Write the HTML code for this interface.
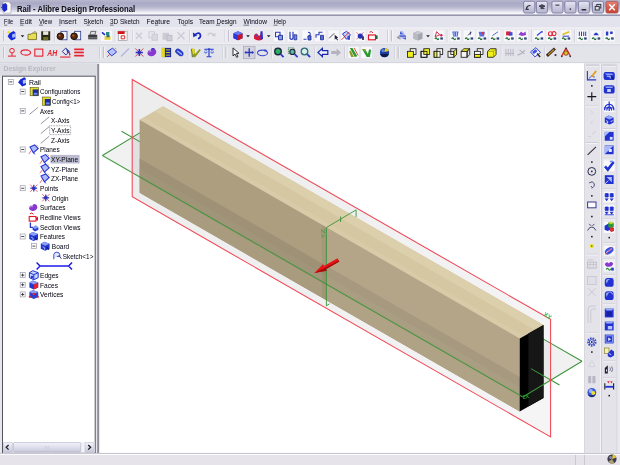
<!DOCTYPE html>
<html><head><meta charset="utf-8"><title>Rail - Alibre Design Professional</title>
<style>
html,body{margin:0;padding:0;background:#ebe9ee;}
body{width:620px;height:465px;overflow:hidden;position:relative;font-family:"Liberation Sans",sans-serif;}
svg{position:absolute;left:0;top:0;display:block}
text{font-family:"Liberation Sans",sans-serif;}
</style></head><body>
<svg width="620" height="465" viewBox="0 0 620 465">
<defs>
<linearGradient id="tb" x1="0" y1="0" x2="0" y2="1">
<stop offset="0" stop-color="#b8b8d0"/><stop offset="0.2" stop-color="#a9a9c5"/><stop offset="0.42" stop-color="#b4b4ce"/><stop offset="0.62" stop-color="#cfcfe0"/><stop offset="0.78" stop-color="#f0f0f7"/><stop offset="0.84" stop-color="#fafafd"/><stop offset="0.9" stop-color="#c4c4d4"/><stop offset="0.95" stop-color="#8e8ea8"/><stop offset="1" stop-color="#a0a0b8"/>
</linearGradient>
<linearGradient id="btn" x1="0" y1="0" x2="0" y2="1">
<stop offset="0" stop-color="#e6e6f4"/><stop offset="1" stop-color="#b2b2cc"/>
</linearGradient>
<linearGradient id="cls" x1="0" y1="0" x2="0" y2="1">
<stop offset="0" stop-color="#e88070"/><stop offset="1" stop-color="#c84030"/>
</linearGradient>
<linearGradient id="sb" x1="0" y1="0" x2="0" y2="1">
<stop offset="0" stop-color="#f4f4fb"/><stop offset="1" stop-color="#c8c8dc"/>
</linearGradient>
<filter id="bl" x="-5%" y="-5%" width="110%" height="110%"><feGaussianBlur stdDeviation="0.55"/></filter>
<filter id="bl2" x="-5%" y="-5%" width="110%" height="110%"><feGaussianBlur stdDeviation="0.42"/></filter>
</defs>

<rect x="0" y="0" width="620" height="465" fill="#ebe9ee"/>
<rect x="0" y="0" width="620" height="16" fill="url(#tb)"/>
<rect x="0" y="16" width="620" height="11.6" fill="#e2e3ec"/>
<rect x="0" y="27.6" width="620" height="16.4" fill="#e9e9ef"/><rect x="0" y="44" width="620" height="19.6" fill="#e3e3ea"/>
<rect x="0" y="27.6" width="620" height="0.8" fill="#f6f6fa"/>
<rect x="0" y="43.6" width="620" height="0.8" fill="#f7f7fa"/><rect x="0" y="44.4" width="620" height="0.8" fill="#d0d0da"/>
<rect x="0" y="62.2" width="620" height="0.9" fill="#d2d2dc"/>
<rect x="99" y="63.2" width="485.5" height="389.5" fill="#ffffff"/>
<rect x="0" y="63.2" width="99.4" height="390" fill="#e6e6ec"/>
<rect x="0" y="63.4" width="96.8" height="12.4" fill="#dcdce3"/>
<rect x="2.5" y="76.2" width="92.7" height="376.8" fill="#ffffff" stroke="#55555f" stroke-width="1"/>
<rect x="97.2" y="64" width="1.9" height="389.5" fill="#8e8e98"/>
<rect x="584.5" y="63.2" width="36" height="390" fill="#e3e3e9"/>
<rect x="600.2" y="64.5" width="0.9" height="388" fill="#f6f6fa"/><rect x="601.1" y="64.5" width="0.8" height="388" fill="#c8c8d2"/>
<rect x="584.2" y="63.2" width="0.8" height="390" fill="#d4d2da"/>
<rect x="616.6" y="64.5" width="0.8" height="388" fill="#d0d0da"/><rect x="617.4" y="63.2" width="2.6" height="390" fill="#e8e8ee"/>
<rect x="0" y="453" width="620" height="12" fill="#e6e4ea"/>
<rect x="0" y="453" width="620" height="1" fill="#c8c6d0"/>
<rect x="0" y="454" width="620" height="1" fill="#fbfbfd"/>
<rect x="575" y="455" width="0.8" height="10" fill="#c4c2cc"/>
<rect x="584" y="455" width="0.8" height="10" fill="#c4c2cc"/>
<g filter="url(#bl)">
<linearGradient id="tg" gradientUnits="userSpaceOnUse" x1="132" y1="100" x2="550" y2="380"><stop offset="0" stop-color="#74747e" stop-opacity="0.135"/><stop offset="1" stop-color="#74747e" stop-opacity="0.075"/></linearGradient>
<polygon points="132.2,79.5 550.6,319.4 550.6,436.9 132.2,196.8" fill="url(#tg)"/>
<polygon points="102.4,155.5 161.6,119.7 582.0,361.2 522.8,397.0" fill="#74747e" fill-opacity="0.10"/>
<line x1="121.5" y1="131.2" x2="141.0" y2="142.4" stroke="#3a943a" stroke-width="1.05" stroke-opacity="1.00"/>
<line x1="102.4" y1="155.5" x2="141.0" y2="132.1" stroke="#3a943a" stroke-width="1.05" stroke-opacity="1.00"/>
<line x1="582.0" y1="361.2" x2="540.0" y2="337.1" stroke="#3a943a" stroke-width="1.05" stroke-opacity="1.00"/>
<polygon points="139.6,119.8 163.0,106.3 543.5,325.1 519.7,338.4" fill="#d6c7a3"/>
<polygon points="139.6,119.8 143.8,117.4 524.0,336.0 519.7,338.4" fill="#d9cba7"/>
<polygon points="154.6,111.2 163.0,106.3 543.5,325.1 534.9,329.9" fill="#dccfab"/>
<polygon points="139.6,119.8 519.7,338.4 519.7,411.4 139.6,192.8" fill="#ad9e80"/>
<linearGradient id="dbg" gradientUnits="userSpaceOnUse" x1="0" y1="0" x2="-10" y2="17.4"><stop offset="0" stop-color="#9a8d73"/><stop offset="1" stop-color="#a5987c"/></linearGradient>
<polygon points="139.6,158.4 519.7,377.0 519.7,395.2 139.6,176.9" fill="#9e9176"/>
<polygon points="139.6,168.4 519.7,387.0 519.7,395.2 139.6,176.9" fill="#a4977b" fill-opacity="0.6"/>
<polygon points="139.6,176.9 519.7,395.2 519.7,411.4 139.6,192.8" fill="#a99b7d"/>
<polygon points="326.8,227.4 519.7,338.4 519.7,411.4 326.8,300.4" fill="#fff8e0" fill-opacity="0.09"/>
<polygon points="322.0,224.7 326.8,227.4 326.8,300.4 322.0,297.7" fill="#3a3020" fill-opacity="0.06"/>
<polygon points="519.7,338.4 543.5,325.1 543.5,398.1 519.7,411.4" fill="#060606"/>
<polygon points="528.3,333.6 543.5,325.1 543.5,398.1 528.3,406.6" fill="#131313"/>
<line x1="102.4" y1="155.5" x2="522.8" y2="397.0" stroke="#3a943a" stroke-width="1.10" stroke-opacity="0.90"/>
<line x1="522.8" y1="397.0" x2="582.0" y2="361.2" stroke="#3a943a" stroke-width="1.05" stroke-opacity="1.00"/>
<line x1="530.9" y1="368.6" x2="559.5" y2="385.0" stroke="#3a943a" stroke-width="1.05" stroke-opacity="1.00"/>
<polyline points="329.5,303.8 326.4,305.8 326.4,227.5 356.1,209.9 356.1,217.0" fill="none" stroke="#3a943a" stroke-width="0.9"/>
<line x1="340.6" y1="216.5" x2="340.6" y2="222.0" stroke="#3a943a" stroke-width="0.90" stroke-opacity="1.00"/>
<text x="324.8" y="238.6" font-size="5" fill="#3a9a3a" transform="rotate(-90 324.8 238.6)" textLength="9.6" lengthAdjust="spacingAndGlyphs">YZ</text>
<polygon points="132.2,79.5 550.6,319.4 550.6,436.9 132.2,196.8" fill="none" stroke="#f04654" stroke-width="1.05"/>
<text x="543" y="315.6" font-size="6.2" font-weight="bold" fill="#30b848" transform="rotate(30 543 315.6)">XY</text>
<text x="523" y="399" font-size="5" font-weight="bold" fill="#22aa22" transform="rotate(-10 523 399)">ZX</text>
<g transform="translate(338.4,259.9) rotate(150.4)">
<polygon points="0,-1.9 15.5,-1.9 15.5,-3.6 27.4,0.6 15.5,3.8 15.5,1.9 0,1.9" fill="#e81212"/>
<polygon points="0,-1.9 15.5,-1.9 15.5,-3.6 27.4,0.6 15.5,-0.4 0,-0.6" fill="#a01010"/>
</g>
</g>
<g filter="url(#bl2)">
<path d="M3.2,1.8 h5.6 l2.2,2.2 v9.2 h-7.8z" fill="#fbfbfb" stroke="#8a8a9a" stroke-width="0.5"/>
<path d="M2.2,4.6 L5.6,3 L7.2,5 L7.2,10 L4.2,12 L2.2,9.6 Z" fill="#1c2cc8"/>
<path d="M2.2,6.6 L0.9,7.4 L2.2,8.4 Z" fill="#1c2cc8"/>
<text x="16.9" y="11.5" font-size="9.30" fill="#0c0c14" textLength="118.2" lengthAdjust="spacingAndGlyphs" font-weight="bold" >Rail - Alibre Design Professional</text>
<rect x="523.6" y="1.3" width="11.2" height="11.8" rx="1.6" fill="url(#btn)" stroke="#74749a" stroke-width="0.8"/>
<rect x="536.4" y="1.3" width="11.0" height="11.8" rx="1.6" fill="url(#btn)" stroke="#74749a" stroke-width="0.8"/>
<rect x="551.9" y="1.3" width="11.0" height="11.8" rx="1.6" fill="url(#btn)" stroke="#74749a" stroke-width="0.8"/>
<rect x="564.8" y="1.3" width="11.1" height="11.8" rx="1.6" fill="url(#btn)" stroke="#74749a" stroke-width="0.8"/>
<rect x="578.4" y="1.3" width="11.0" height="11.8" rx="1.6" fill="url(#btn)" stroke="#74749a" stroke-width="0.8"/>
<rect x="592.5" y="1.3" width="11.0" height="11.8" rx="1.6" fill="url(#btn)" stroke="#74749a" stroke-width="0.8"/>
<rect x="606" y="1.3" width="12" height="11.8" rx="1.6" fill="url(#cls)" stroke="#9a5050" stroke-width="0.7"/>
<path d="M609.2,4.2 L614.8,10.2 M614.8,4.2 L609.2,10.2" stroke="#fff" stroke-width="1.5" fill="none"/>
<path d="M526.5,9 q0,-3.5 4,-3.5 M527.3,7 l-1.2,2.2 l2.6,0.2" stroke="#2a2a3a" stroke-width="1.1" fill="none"/>
<path d="M539,6.2 l3,-1.5 l3,1.5 l-3,1.5 z M540.5,8.6 h4" stroke="#3a3a4a" stroke-width="1" fill="#4a4a5a"/>
<rect x="555.4" y="4.6" width="4" height="1.1" fill="#3a3a4a"/>
<rect x="569.6" y="8.4" width="1.4" height="1.4" fill="#2a2a3a"/>
<rect x="581.6" y="9" width="4.6" height="1.5" fill="#2a2a3a"/>
<rect x="596.8" y="4.4" width="4" height="3.6" fill="none" stroke="#2a2a3a" stroke-width="0.9"/><rect x="595.2" y="6.4" width="4" height="3.6" fill="#dcdce8" stroke="#2a2a3a" stroke-width="0.9"/>
<text x="4.0" y="23.9" font-size="7.90" fill="#0c0c16" textLength="9.0" lengthAdjust="spacingAndGlyphs" >File</text>
<text x="20.0" y="23.9" font-size="7.90" fill="#0c0c16" textLength="12.0" lengthAdjust="spacingAndGlyphs" >Edit</text>
<text x="39.0" y="23.9" font-size="7.90" fill="#0c0c16" textLength="13.0" lengthAdjust="spacingAndGlyphs" >View</text>
<text x="59.0" y="23.9" font-size="7.90" fill="#0c0c16" textLength="17.5" lengthAdjust="spacingAndGlyphs" >Insert</text>
<text x="83.5" y="23.9" font-size="7.90" fill="#0c0c16" textLength="19.5" lengthAdjust="spacingAndGlyphs" >Sketch</text>
<text x="110.0" y="23.9" font-size="7.90" fill="#0c0c16" textLength="29.5" lengthAdjust="spacingAndGlyphs" >3D Sketch</text>
<text x="146.5" y="23.9" font-size="7.90" fill="#0c0c16" textLength="23.5" lengthAdjust="spacingAndGlyphs" >Feature</text>
<text x="177.5" y="23.9" font-size="7.90" fill="#0c0c16" textLength="15.5" lengthAdjust="spacingAndGlyphs" >Tools</text>
<text x="199.0" y="23.9" font-size="7.90" fill="#0c0c16" textLength="37.5" lengthAdjust="spacingAndGlyphs" >Team Design</text>
<text x="243.5" y="23.9" font-size="7.90" fill="#0c0c16" textLength="23.5" lengthAdjust="spacingAndGlyphs" >Window</text>
<text x="273.5" y="23.9" font-size="7.90" fill="#0c0c16" textLength="12.5" lengthAdjust="spacingAndGlyphs" >Help</text>
<rect x="4.0" y="24.8" width="3.2" height="0.6" fill="#30303a"/>
<rect x="20.0" y="24.8" width="3.5" height="0.6" fill="#30303a"/>
<rect x="39.0" y="24.8" width="4.0" height="0.6" fill="#30303a"/>
<rect x="59.0" y="24.8" width="1.5" height="0.6" fill="#30303a"/>
<rect x="86.8" y="24.8" width="3.0" height="0.6" fill="#30303a"/>
<rect x="110.0" y="24.8" width="3.5" height="0.6" fill="#30303a"/>
<rect x="155.0" y="24.8" width="3.0" height="0.6" fill="#30303a"/>
<rect x="183.0" y="24.8" width="3.2" height="0.6" fill="#30303a"/>
<rect x="216.0" y="24.8" width="4.0" height="0.6" fill="#30303a"/>
<rect x="243.5" y="24.8" width="5.5" height="0.6" fill="#30303a"/>
<rect x="273.5" y="24.8" width="4.0" height="0.6" fill="#30303a"/>
</g>
<g filter="url(#bl2)">
<rect x="3.0" y="30.3" width="1.3" height="11" fill="#c4c2ce"/><rect x="4.3" y="30.3" width="0.7" height="11" fill="#fafafc"/>
<rect x="3.0" y="47.0" width="1.3" height="11" fill="#c4c2ce"/><rect x="4.3" y="47.0" width="0.7" height="11" fill="#fafafc"/>
<g transform="translate(12.0,35.8)"><path d="M-2.6,-2.6 L1.6,-4.8 L3.4,-3.4 L3.4,3 L-0.6,4.8 L-2.6,2.6 L-4.4,0.6 Z" fill="#1428d8"/><path d="M0,-1.4 L3.4,-2.6 L3.4,1 L0.4,2.2Z" fill="#a8bcf8"/><circle cx="-3.2" cy="-3.6" r="1.3" fill="#f0e020"/></g>
<path d="M20.7,35.2 h3.6 l-1.8,2 z" fill="#1a1a22"/>
<g transform="translate(32.5,35.8)"><path d="M-4.5,-1.5 h3 l1,-1.2 h4.5 v6.5 h-8.5z" fill="#e8dc58" stroke="#6a6418" stroke-width="0.8"/><path d="M1,-3.5 q2,-2 3,0.5" stroke="#8a8430" stroke-width="0.8" fill="none"/></g>
<g transform="translate(45.7,35.8)"><rect x="-4.5" y="-4.5" width="9" height="9" fill="#2a2a14"/><rect x="-2.6" y="-4.5" width="5.2" height="3.6" fill="#e8e8e0"/><rect x="-2.5" y="1.2" width="5" height="3.3" fill="#70702a"/></g>
<rect x="54.0" y="29.6" width="0.8" height="12.5" fill="#c9c7d2"/><rect x="54.8" y="29.6" width="0.7" height="12.5" fill="#fbfbfd"/>
<g transform="translate(62.0,35.8)"><rect x="-1" y="-4.5" width="6" height="8.5" fill="#f4f4f8" stroke="#2a3a8a" stroke-width="0.8"/><circle cx="-1.6" cy="0.5" r="3.3" fill="#5a2a0c"/><circle cx="-1.6" cy="0.5" r="3.3" fill="none" stroke="#1a1008" stroke-width="1"/><circle cx="-2.4" cy="-0.4" r="1" fill="#a86a30"/></g>
<g transform="translate(75.7,35.8)"><rect x="-1" y="-4.5" width="6" height="8.5" fill="#f4f4f8" stroke="#2a3a8a" stroke-width="0.8"/><circle cx="-1.6" cy="0.5" r="3.3" fill="#5a2a0c"/><circle cx="-1.6" cy="0.5" r="3.3" fill="none" stroke="#1a1008" stroke-width="1"/><circle cx="-2.4" cy="-0.4" r="1" fill="#a86a30"/></g>
<g transform="translate(92.7,35.8)"><path d="M-4.5,-1 h9 v4.5 h-9z" fill="#3a3a40"/><path d="M-2.8,-1 l1,-3.4 h5 l-1,3.4z" fill="#dcdce0" stroke="#3a3a40" stroke-width="0.7"/><rect x="-4.5" y="1.6" width="9" height="1" fill="#8a8a90"/></g>
<g transform="translate(106.5,35.8)"><rect x="-5.5" y="-5.2" width="11.0" height="10.5" fill="#f8f8fb"/><path d="M-4.5,-3.5 l3,2.5" stroke="#1a2ad0" stroke-width="1.6"/><rect x="-0.5" y="-3.8" width="3.4" height="3.4" fill="#2a8a8a"/><rect x="-2" y="0.4" width="6" height="3.6" fill="#e0d040"/><rect x="0" y="-0.6" width="3" height="2" fill="#206a6a"/></g>
<rect x="114.7" y="29.6" width="0.8" height="12.5" fill="#c9c7d2"/><rect x="115.5" y="29.6" width="0.7" height="12.5" fill="#fbfbfd"/>
<g transform="translate(122.7,35.8)"><rect x="-4.2" y="-4.6" width="8.6" height="9.4" fill="#fafafa" stroke="#8a8a92" stroke-width="0.6"/><rect x="-5" y="-4.6" width="7" height="2.8" fill="#d01818"/><path d="M-1.5,0 h3.5 v3 h-3.5z" fill="none" stroke="#d02020" stroke-width="0.9"/></g>
<rect x="132.0" y="29.6" width="0.8" height="12.5" fill="#c9c7d2"/><rect x="132.8" y="29.6" width="0.7" height="12.5" fill="#fbfbfd"/>
<g transform="translate(139.0,35.8)"><path d="M-3,-3 L3,3 M3,-3 L-3,3" stroke="#cdcbd6" stroke-width="1.3"/></g>
<g transform="translate(153.0,35.8)"><rect x="-4" y="-4" width="5.5" height="6" fill="none" stroke="#cdcbd6" stroke-width="1"/><rect x="-1" y="-1.5" width="5.5" height="6" fill="#d8d6de" stroke="#cdcbd6" stroke-width="1"/></g>
<g transform="translate(167.0,35.8)"><rect x="-4.5" y="-3" width="6.5" height="7" fill="#cdcbd6"/><rect x="0" y="-0.5" width="5" height="5.5" fill="#cfcdd6" stroke="#b8b6c2" stroke-width="0.8"/></g>
<g transform="translate(181.0,35.8)"><path d="M-3.5,-3.5 L3.5,3.5 M3.5,-3.5 L-3.5,3.5" stroke="#cdcbd6" stroke-width="1.3"/></g>
<rect x="189.3" y="29.6" width="0.8" height="12.5" fill="#c9c7d2"/><rect x="190.1" y="29.6" width="0.7" height="12.5" fill="#fbfbfd"/>
<g transform="translate(197.5,35.8)"><path d="M-2.5,-1.2 q5,-3.5 5.5,1 q0,2.5 -2.5,3.2" stroke="#1828c0" stroke-width="1.7" fill="none"/><path d="M-4.6,-3.2 l0.4,4.6 l4,-2z" fill="#1828c0"/></g>
<g transform="translate(211.0,35.8)"><path d="M2.5,-1.2 q-5,-3 -5.5,1" stroke="#cdcbd6" stroke-width="1.5" fill="none"/><path d="M4.6,-3 l-0.4,4.2 l-3.8,-1.8z" fill="#cdcbd6"/></g>
<rect x="224.6" y="29.6" width="0.8" height="12.5" fill="#c9c7d2"/><rect x="225.4" y="29.6" width="0.7" height="12.5" fill="#fbfbfd"/>
<rect x="228.0" y="30.3" width="1.3" height="11" fill="#c4c2ce"/><rect x="229.3" y="30.3" width="0.7" height="11" fill="#fafafc"/>
<g transform="translate(238.0,35.8)"><path d="M-4.5,-2.5 L0,-4.5 L4.5,-2.5 L4.5,2.5 L0,4.5 L-4.5,2.5Z" fill="#1a28c8"/><path d="M-4.5,-2.5 L0,-0.5 L0,4.5 L-4.5,2.5Z" fill="#2a38e0"/><path d="M0,-0.5 L4.5,-2.5 L4.5,2.5 L0,4.5Z" fill="#c81820"/><path d="M-4.5,-2.5 L0,-4.5 L4.5,-2.5 L0,-0.5Z" fill="#6a78f0"/></g>
<path d="M246.2,35.2 h3.6 l-1.8,2 z" fill="#1a1a22"/>
<g transform="translate(259.0,35.8)"><path d="M-5,0 q2,-4 4,-1 q2,3 3,-3 l1,8 q-4,2 -8,-1z" fill="#d81838"/><path d="M1.5,-4.5 l2,0 l0.5,8 l-2.5,0z" fill="#2030c8"/><path d="M-4,-1.5 l3,2.5" stroke="#4050e0" stroke-width="1.2"/></g>
<path d="M266.9,35.2 h3.6 l-1.8,2 z" fill="#1a1a22"/>
<g transform="translate(279.0,35.8)"><rect x="-5.2" y="-5.5" width="10.5" height="11.0" fill="#f8f8fb"/><path d="M-3.5,-3.5 h4.5 v4.5 h-4.5z" fill="none" stroke="#2a3ac0" stroke-width="1.1"/><path d="M-0.5,-0.5 h4 v4.5 h-4z" fill="#8a9ae8" stroke="#1a2a90" stroke-width="0.9"/></g>
<g transform="translate(293.0,35.8)"><rect x="-5.2" y="-5.5" width="10.5" height="11.0" fill="#f8f8fb"/><path d="M-3,-4 v6.5 q1.5,2 3,0 v-6.5" fill="none" stroke="#2a3ac0" stroke-width="1.2"/><path d="M1,-1 h2.8 v5 h-2.8z" fill="#7a8ae0" stroke="#1a2a90" stroke-width="0.8"/></g>
<g transform="translate(307.5,35.8)"><rect x="-5.2" y="-5.5" width="10.5" height="11.0" fill="#f8f8fb"/><path d="M-4,3.5 h3 M0.5,-3.5 q3,0 2,3 q-1,2 -2.5,1.5" fill="none" stroke="#2a3ac0" stroke-width="1.1"/><path d="M0.5,0 h3 v4.2 h-3z" fill="#5a6ad8" stroke="#1a2a90" stroke-width="0.8"/></g>
<g transform="translate(320.0,35.8)"><rect x="-5.2" y="-5.5" width="10.5" height="11.0" fill="#f8f8fb"/><path d="M-4,2 v-3 h3 v-2.5 h3.5" fill="none" stroke="#2a3ac0" stroke-width="1.1"/><path d="M0.5,-0.5 h3 v4.5 h-3z" fill="#5a6ad8" stroke="#1a2a90" stroke-width="0.8"/></g>
<g transform="translate(333.7,35.8)"><rect x="-5.2" y="-5.5" width="10.5" height="11.0" fill="#f8f8fb"/><path d="M-4.5,2.5 L0.5,-2.5" stroke="#3a3a44" stroke-width="0.9"/><path d="M1,-1 l0,5 l1.2,-1.2 l1.4,2 l0.8,-0.6 l-1.4,-2 l1.6,-0.2z" fill="#20203a"/></g>
<g transform="translate(346.0,35.8)"><rect x="-5.2" y="-5.5" width="10.5" height="11.0" fill="#f8f8fb"/><path d="M-3.5,-2 L0.5,-4.5 L4.5,-1 L0.5,3.5Z" fill="#c8d0f8" stroke="#2a3ac8" stroke-width="1"/><path d="M-4.5,4 L3.5,-4" stroke="#d83030" stroke-width="0.9"/><rect x="1.5" y="0" width="2.5" height="4" fill="#3a4ad0"/></g>
<g transform="translate(360.0,35.8)"><rect x="-5.2" y="-5.5" width="10.5" height="11.0" fill="#f8f8fb"/><path d="M-3.5,-3.5 L3.5,3.5 M3.5,-3.5 L-3.5,3.5" stroke="#d85050" stroke-width="0.8"/><circle cx="0.3" cy="0.3" r="2.6" fill="#2a30b8"/><rect x="2" y="0.5" width="2" height="3.6" fill="#3a3a6a"/></g>
<g transform="translate(373.0,35.8)"><rect x="-5.5" y="-5.5" width="11.0" height="11.0" fill="#f8f8fb"/><rect x="-4.5" y="-0.8" width="7" height="4.8" fill="#fff" stroke="#e01828" stroke-width="1.2"/><path d="M-3.5,-3.6 q2,-1.6 3.4,0.6" stroke="#e01828" stroke-width="1" fill="none"/><rect x="2.8" y="-0.4" width="1.8" height="3.6" fill="#1a6a3a"/></g>
<rect x="387.3" y="29.6" width="0.8" height="12.5" fill="#c9c7d2"/><rect x="388.1" y="29.6" width="0.7" height="12.5" fill="#fbfbfd"/>
<rect x="390.8" y="30.3" width="1.3" height="11" fill="#c4c2ce"/><rect x="392.1" y="30.3" width="0.7" height="11" fill="#fafafc"/>
<g transform="translate(401.5,35.8)"><path d="M-5,2 L-1,-2 L-1,4Z" fill="#9a9aa8"/><path d="M-1.5,-4.5 L4.5,0 L4.5,4 L-1.5,1.5Z" fill="#4a62d0"/><path d="M-1.5,-4.5 L1,-4.8 L4.5,0 Z" fill="#a8b8f0"/><path d="M-2,-1 h6 M-2,1.5 h6" stroke="#e8ecff" stroke-width="0.7"/></g>
<g transform="translate(418.0,35.8)"><path d="M-4.5,-3 L0,-4.8 L4.5,-3 L4.5,3 L0,4.8 L-4.5,3Z" fill="#a4a4ac"/><path d="M-4.5,-3 L0,-1.2 L0,4.8 L-4.5,3Z" fill="#b8b8c0"/><path d="M-4.5,-3 L0,-4.8 L4.5,-3 L0,-1.2Z" fill="#c8c8d0"/></g>
<path d="M426.2,35.2 h3.6 l-1.8,2 z" fill="#1a1a22"/>
<g transform="translate(438.7,35.8)"><rect x="-5.4" y="-5.5" width="10.8" height="11.0" fill="#f8f8fb"/><path d="M-2,-4.2 l3,3.4 l-4.6,1.6z" fill="none" stroke="#d02040" stroke-width="0.9"/><circle cx="2.6" cy="-0.6" r="1.2" fill="#d02040"/><path d="M-3.8,3.2 q1.2,-2.2 2.2,0 q0.8,1.4 1.8,-0.6" stroke="#1a6a30" stroke-width="1.1" fill="none"/><rect x="1.6" y="1.6" width="2.6" height="2.2" fill="#30407a"/></g>
<rect x="446.8" y="29.6" width="0.8" height="12.5" fill="#c9c7d2"/><rect x="447.6" y="29.6" width="0.7" height="12.5" fill="#fbfbfd"/>
<g transform="translate(455.5,35.8)"><rect x="-5.4" y="-5.5" width="10.8" height="11.0" fill="#f8f8fb"/><path d="M-3.2,-4.2 h6.2 l-0.8,5 h-4.6z" fill="#4a68d8"/><path d="M-1.4,-3.6 v3.6 M1,-3.6 v3.6" stroke="#e0e8ff" stroke-width="0.8"/><path d="M-3.8,3.2 q1.2,-2.2 2.2,0 q0.8,1.4 1.8,-0.6" stroke="#1a6a30" stroke-width="1.1" fill="none"/><rect x="1.6" y="1.6" width="2.6" height="2.2" fill="#30407a"/></g>
<g transform="translate(469.0,35.8)"><rect x="-5.4" y="-5.5" width="10.8" height="11.0" fill="#f8f8fb"/><path d="M-1,-0.4 l3.6,-3.6 M1.4,-4.2 v3" stroke="#2a2a6a" stroke-width="0.9"/><path d="M-3.8,3.2 q1.2,-2.2 2.2,0 q0.8,1.4 1.8,-0.6" stroke="#1a6a30" stroke-width="1.1" fill="none"/><rect x="1.6" y="1.6" width="2.6" height="2.2" fill="#30407a"/></g>
<g transform="translate(482.0,35.8)"><rect x="-5.4" y="-5.5" width="10.8" height="11.0" fill="#f8f8fb"/><path d="M-3.4,-4 h6.4 l-1,4.6 h-4.4z" fill="#5a70e0"/><circle cx="0.8" cy="-2.6" r="1.3" fill="#d83048"/><path d="M-3.8,3.2 q1.2,-2.2 2.2,0 q0.8,1.4 1.8,-0.6" stroke="#1a6a30" stroke-width="1.1" fill="none"/><rect x="1.6" y="1.6" width="2.6" height="2.2" fill="#30407a"/></g>
<g transform="translate(495.0,35.8)"><rect x="-5.4" y="-5.5" width="10.8" height="11.0" fill="#f8f8fb"/><path d="M-2.6,-0.2 l5.6,-3.8" stroke="#5a6ad0" stroke-width="1"/><path d="M-3.8,3.2 q1.2,-2.2 2.2,0 q0.8,1.4 1.8,-0.6" stroke="#1a6a30" stroke-width="1.1" fill="none"/><rect x="1.6" y="1.6" width="2.6" height="2.2" fill="#30407a"/></g>
<g transform="translate(509.5,35.8)"><rect x="-5.4" y="-5.5" width="10.8" height="11.0" fill="#f8f8fb"/><path d="M-3.4,-4.4 h4.6 v4 h-4.6z" fill="#d82038"/><path d="M-0.6,-3.6 h3.6 v3.4 h-3.6z" fill="#3a48d8"/><path d="M-3.8,3.2 q1.2,-2.2 2.2,0 q0.8,1.4 1.8,-0.6" stroke="#1a6a30" stroke-width="1.1" fill="none"/><rect x="1.6" y="1.6" width="2.6" height="2.2" fill="#30407a"/></g>
<g transform="translate(522.5,35.8)"><rect x="-5.4" y="-5.5" width="10.8" height="11.0" fill="#f8f8fb"/><path d="M-4,-1 l2.6,-3.2 l2,1.6 l2.4,-1.8 l0.6,3.6 l-4,1z" fill="#9040d0"/><path d="M-3.8,3.2 q1.2,-2.2 2.2,0 q0.8,1.4 1.8,-0.6" stroke="#1a6a30" stroke-width="1.1" fill="none"/><rect x="1.6" y="1.6" width="2.6" height="2.2" fill="#30407a"/></g>
<rect x="531.0" y="29.6" width="0.8" height="12.5" fill="#c9c7d2"/><rect x="531.8" y="29.6" width="0.7" height="12.5" fill="#fbfbfd"/>
<g transform="translate(539.0,35.8)"><rect x="-5.4" y="-5.5" width="10.8" height="11.0" fill="#f8f8fb"/><path d="M-2,-0.2 l4.8,-4.2" stroke="#3a4ad8" stroke-width="1.3"/><circle cx="3" cy="-4" r="0.9" fill="#3a4ad8"/><path d="M-3.8,3.2 q1.2,-2.2 2.2,0 q0.8,1.4 1.8,-0.6" stroke="#1a6a30" stroke-width="1.1" fill="none"/><rect x="1.6" y="1.6" width="2.6" height="2.2" fill="#30407a"/></g>
<g transform="translate(552.0,35.8)"><rect x="-5.4" y="-5.5" width="10.8" height="11.0" fill="#f8f8fb"/><circle cx="-1.6" cy="-2" r="2" fill="none" stroke="#e02838" stroke-width="1.1"/><circle cx="2" cy="-2.2" r="2" fill="none" stroke="#e02838" stroke-width="1.1"/><path d="M-3.8,3.2 q1.2,-2.2 2.2,0 q0.8,1.4 1.8,-0.6" stroke="#1a6a30" stroke-width="1.1" fill="none"/><rect x="1.6" y="1.6" width="2.6" height="2.2" fill="#30407a"/></g>
<g transform="translate(566.0,35.8)"><rect x="-5.4" y="-5.5" width="10.8" height="11.0" fill="#f8f8fb"/><path d="M-3.6,-1.4 l7,-2.6" stroke="#e0c020" stroke-width="1.6"/><path d="M-3.4,0.4 h6.6" stroke="#4a5ae0" stroke-width="1.2"/><path d="M-3.8,3.2 q1.2,-2.2 2.2,0 q0.8,1.4 1.8,-0.6" stroke="#1a6a30" stroke-width="1.1" fill="none"/><rect x="1.6" y="1.6" width="2.6" height="2.2" fill="#30407a"/></g>
<rect x="574.0" y="29.6" width="0.8" height="12.5" fill="#c9c7d2"/><rect x="574.8" y="29.6" width="0.7" height="12.5" fill="#fbfbfd"/>
<g transform="translate(582.5,35.8)"><rect x="-5.4" y="-5.5" width="10.8" height="11.0" fill="#f8f8fb"/><path d="M-3.2,-4.2 v4.4 M-1,-4.2 v4.4 M1.2,-4.2 v4.4 M3.2,-4.2 v4.4" stroke="#2a3ac8" stroke-width="1"/><path d="M-3.8,3.2 q1.2,-2.2 2.2,0 q0.8,1.4 1.8,-0.6" stroke="#1a6a30" stroke-width="1.1" fill="none"/><rect x="1.6" y="1.6" width="2.6" height="2.2" fill="#30407a"/></g>
<g transform="translate(596.0,35.8)"><rect x="-5.4" y="-5.5" width="10.8" height="11.0" fill="#f8f8fb"/><path d="M-2.6,-0.6 q2.6,-5.6 5.4,0" fill="#2a3ac8"/><path d="M-3.8,3.2 q1.2,-2.2 2.2,0 q0.8,1.4 1.8,-0.6" stroke="#1a6a30" stroke-width="1.1" fill="none"/><rect x="1.6" y="1.6" width="2.6" height="2.2" fill="#30407a"/></g>
<g transform="translate(609.5,35.8)"><rect x="-5.4" y="-5.5" width="10.8" height="11.0" fill="#f8f8fb"/><path d="M-3.6,-4.2 h2.4 v4 h-2.4z M0.6,-4.2 h2.6 v2.4 h-2.6z" fill="#2a3ac8"/><path d="M-3.8,3.2 q1.2,-2.2 2.2,0 q0.8,1.4 1.8,-0.6" stroke="#1a6a30" stroke-width="1.1" fill="none"/><rect x="1.6" y="1.6" width="2.6" height="2.2" fill="#30407a"/></g>
<g transform="translate(12.0,52.5)"><circle cx="0" cy="-1.8" r="2.3" fill="none" stroke="#e82030" stroke-width="1"/><path d="M-4,3.6 h8 M0,0.6 v3" stroke="#e82030" stroke-width="1"/></g>
<g transform="translate(25.7,52.5)"><ellipse cx="0" cy="0" rx="4.8" ry="2.6" fill="none" stroke="#e82030" stroke-width="1.1"/></g>
<g transform="translate(38.8,52.5)"><rect x="-4" y="-3.4" width="8" height="7" fill="none" stroke="#e82030" stroke-width="1.1"/></g>
<text x="47.3" y="55.8" font-size="8.6" font-weight="bold" font-style="italic" fill="#e82030" textLength="10" lengthAdjust="spacingAndGlyphs">AH</text>
<g transform="translate(65.3,52.5)"><path d="M-3,-1 l3.4,-3.4 l3.6,3.4 l-3.4,3.4z" fill="#e8e8f4" stroke="#20207a" stroke-width="0.9"/><path d="M0.4,-4.4 l3.6,3.4 l-1.8,1.8 z" fill="#2840c8"/><path d="M3.6,-0.4 q1.6,2 0.4,3.2" stroke="#d02030" stroke-width="1.2" fill="none"/><rect x="-5.2" y="4" width="10.4" height="1.1" fill="#e82030"/></g>
<g transform="translate(79.0,52.5)"><rect x="-4.8" y="-4" width="9.6" height="1.7" fill="#e82030"/><rect x="-4.8" y="-0.9" width="9.6" height="1.7" fill="#e82030"/><rect x="-4.8" y="2.3" width="9.6" height="1.7" fill="#e82030"/></g>
<rect x="99.3" y="46.3" width="0.8" height="12.5" fill="#c9c7d2"/><rect x="100.1" y="46.3" width="0.7" height="12.5" fill="#fbfbfd"/>
<rect x="102.8" y="47.0" width="1.3" height="11" fill="#c4c2ce"/><rect x="104.1" y="47.0" width="0.7" height="11" fill="#fafafc"/>
<g transform="translate(112.0,52.5)"><path d="M-4.4,-1 L0.6,-4.4 L4.6,-0.4 L-0.4,3.4Z" fill="#b8c4f8" stroke="#2a3ad0" stroke-width="1"/><path d="M-4.8,4.4 L-2.4,1.8" stroke="#d04040" stroke-width="0.9"/><path d="M3,-4.6 l1.4,1.4" stroke="#e0a020" stroke-width="1"/></g>
<g transform="translate(125.0,52.5)"><path d="M-4,4 L4,-4" stroke="#b0b6de" stroke-width="1.3"/></g>
<g transform="translate(139.3,52.5)"><path d="M-4,-4 L4,4 M4,-4 L-4,4" stroke="#e03040" stroke-width="0.9"/><path d="M-3.6,0 h7.2 M0,-3.6 v7.2" stroke="#2a30c0" stroke-width="1.5"/><circle cx="0" cy="0" r="1.8" fill="#2a30c0"/></g>
<g transform="translate(152.0,52.5)"><path d="M-4.6,0.6 q1,-4.4 3.4,-2.6 q1.6,-3.4 4,-1.6 q2.6,2.4 0.6,5.4 q-2.4,3 -5.4,1.6 q-2.8,-0.6 -2.6,-2.8z" fill="#8838d0"/><path d="M-3.4,-0.6 q1.2,-2 2.6,-0.8" stroke="#d8a8f8" stroke-width="1" fill="none"/><path d="M-1,-2.8 q1.6,-2 3.4,-0.4" stroke="#2a30c0" stroke-width="1.2" fill="none"/></g>
<g transform="translate(166.5,52.5)"><rect x="-4.6" y="-4.6" width="9.2" height="9.2" fill="#1a2898"/><rect x="-4.6" y="-4.6" width="3" height="9.2" fill="#e0d820"/><path d="M-0.6,-2.6 h4.2 M-0.6,0 h4.2 M-0.6,2.6 h4.2" stroke="#e0d820" stroke-width="0.9"/></g>
<g transform="translate(179.7,52.5)"><path d="M-4.2,-2.6 q2,-2.4 4.4,-0.6 l2.4,2 q2.4,2.4 0.4,4.4 q-2.4,1.4 -4.4,-0.6 l-2.4,-2 q-1.6,-1.6 -0.4,-3.2z" fill="#2a40c8"/><path d="M-2.4,-1.6 l4.6,3.6" stroke="#b8c4f8" stroke-width="1.2"/></g>
<rect x="187.8" y="46.3" width="0.8" height="12.5" fill="#c9c7d2"/><rect x="188.6" y="46.3" width="0.7" height="12.5" fill="#fbfbfd"/>
<g transform="translate(196.0,52.5)"><path d="M-4.6,-4 l3,0.4 l0.6,5.4 l4.6,-5.4 l1.2,1 l-5.6,7.4 l-2.4,0z" fill="#8a9a18"/><path d="M-4.6,-4 l3,0.4 l0.4,4 l-2,2z" fill="#e0d820"/><path d="M-3.6,4.6 l-1,-8" stroke="#3a4a10" stroke-width="0.7"/></g>
<g transform="translate(209.0,52.5)"><path d="M-4.6,-3.2 h9.2 M0,-4.4 v8 M-2.4,4.2 h4.8" stroke="#1a30c8" stroke-width="1.1"/><path d="M-5,-0.2 q1.8,2.6 3.6,0z M1.4,-0.2 q1.8,2.6 3.6,0z" fill="#4a68e8"/><path d="M-3.2,-3 l-1.6,2.8 M-3.2,-3 l1.6,2.8 M3.2,-3 l-1.6,2.8 M3.2,-3 l1.6,2.8" stroke="#4a68e8" stroke-width="0.6"/></g>
<rect x="222.0" y="46.3" width="0.8" height="12.5" fill="#c9c7d2"/><rect x="222.8" y="46.3" width="0.7" height="12.5" fill="#fbfbfd"/>
<rect x="225.3" y="47.0" width="1.3" height="11" fill="#c4c2ce"/><rect x="226.6" y="47.0" width="0.7" height="11" fill="#fafafc"/>
<g transform="translate(236.0,52.5)"><path d="M-3,-4.6 L-3,3.4 L-1,1.6 L0.6,4.8 L2,4.2 L0.4,1 L3,0.8Z" fill="#f8f8fc" stroke="#1a1a22" stroke-width="0.9"/></g>
<rect x="243.5" y="46.3" width="11.5" height="12.4" fill="#d4d2dc" stroke="#a8a6b4" stroke-width="0.7"/>
<g transform="translate(249.2,52.5)"><path d="M-4,0 h8 M0,-4.2 v8.4" stroke="#2838c0" stroke-width="1.3"/><path d="M-4.8,0 l1.8,-1.6 v3.2z M4.8,0 l-1.8,-1.6 v3.2z" fill="#2838c0"/></g>
<g transform="translate(262.5,52.5)"><ellipse cx="0" cy="0.4" rx="5" ry="2.8" fill="none" stroke="#3848d0" stroke-width="1.1"/><path d="M2,-3.6 l3,1.6 l-3,1.2z" fill="#3848d0"/></g>
<rect x="271.0" y="46.3" width="0.8" height="12.5" fill="#c9c7d2"/><rect x="271.8" y="46.3" width="0.7" height="12.5" fill="#fbfbfd"/>
<g transform="translate(279.0,52.5)"><circle cx="-1" cy="-1" r="3.3" fill="#28b060" stroke="#20203a" stroke-width="1.3"/><path d="M1.6,1.6 L4.6,4.6" stroke="#2a40d0" stroke-width="1.8"/></g>
<g transform="translate(293.0,52.5)"><rect x="-4.6" y="-4.6" width="5.6" height="5.6" fill="none" stroke="#30804a" stroke-width="0.9" stroke-dasharray="1.2,0.8"/><circle cx="-0.6" cy="-0.6" r="2.6" fill="#58b8a0" stroke="#20203a" stroke-width="1.1"/><path d="M1.6,1.6 L4.6,4.6" stroke="#2a40d0" stroke-width="1.8"/></g>
<g transform="translate(305.5,52.5)"><circle cx="-1" cy="-1" r="3.3" fill="#d8f0e8" stroke="#30707a" stroke-width="1.3"/><path d="M1.6,1.6 L4.6,4.6" stroke="#2a40d0" stroke-width="1.8"/></g>
<rect x="314.0" y="46.3" width="0.8" height="12.5" fill="#c9c7d2"/><rect x="314.8" y="46.3" width="0.7" height="12.5" fill="#fbfbfd"/>
<g transform="translate(323.0,52.5)"><path d="M-5,0 L-0.6,-4.2 L-0.6,-1.8 L4.8,-1.8 L4.8,1.8 L-0.6,1.8 L-0.6,4.2Z" fill="#f0f2ff" stroke="#1828b0" stroke-width="1.2"/></g>
<g transform="translate(336.0,52.5)"><path d="M5,0 L0.6,-4 L0.6,-1.6 L-4.8,-1.6 L-4.8,1.6 L0.6,1.6 L0.6,4Z" fill="#b4b2bc"/></g>
<rect x="344.3" y="46.3" width="0.8" height="12.5" fill="#c9c7d2"/><rect x="345.1" y="46.3" width="0.7" height="12.5" fill="#fbfbfd"/>
<g transform="translate(353.5,52.5)"><rect x="-5.2" y="-5.8" width="10.5" height="11.5" fill="#f8f8fb"/><path d="M-3.6,-4.6 L-1,-4.6 L3.8,3.8 L1.2,4.6Z" fill="#2a9a30"/><path d="M-4.4,-1 L-2.6,-2 L0.4,4.4 L-2.4,4.4Z" fill="#8a9a20"/><path d="M0.6,-4.6 L4.6,3" stroke="#e04030" stroke-width="0.9"/></g>
<g transform="translate(366.5,52.5)"><rect x="-5.2" y="-5.8" width="10.5" height="11.5" fill="#f8f8fb"/><path d="M-4.4,-3.6 L-1.4,-3.6 L1.4,1.6 L2.6,-3.2 L4.6,-2.6 L3.4,4.6 L0.2,4.6Z" fill="#2a9a30"/><path d="M-4.4,-3.6 L-1.4,-3.6 L0.2,0 Z" fill="#8aa820"/></g>
<g transform="translate(384.5,52.5)"><circle cx="0" cy="0" r="4.6" fill="#1a3aa0"/><path d="M-0.4,-0.4 L4.4,-1.6 A4.6,4.6 0 0 0 0.6,-4.5Z" fill="#e8d020"/><circle cx="-1.6" cy="-1.8" r="1.6" fill="#5a80e0"/><path d="M-4.4,1.4 A4.6,4.6 0 0 0 4.4,1.4 Z" fill="#101a50"/></g>
<rect x="394.0" y="46.3" width="0.8" height="12.5" fill="#c9c7d2"/><rect x="394.8" y="46.3" width="0.7" height="12.5" fill="#fbfbfd"/>
<rect x="397.6" y="47.0" width="1.3" height="11" fill="#c4c2ce"/><rect x="398.9" y="47.0" width="0.7" height="11" fill="#fafafc"/>
<g transform="translate(411.7,53.0) scale(0.93)"><rect x="-1.6" y="-4.6" width="6.2" height="6.2" fill="#f4f4f4" stroke="#1a1a1a" stroke-width="0.9"/><rect x="-4.6" y="-1.8" width="6.4" height="6.4" fill="#f2f01c" stroke="#1a1a1a" stroke-width="0.9"/></g>
<g transform="translate(425.3,53.0) scale(0.93)"><rect x="-4.6" y="-1.8" width="6.4" height="6.4" fill="#f4f4f4" stroke="#1a1a1a" stroke-width="0.9"/><rect x="-1.6" y="-4.6" width="6.2" height="6.2" fill="#f2f01c" stroke="#1a1a1a" stroke-width="0.9"/><rect x="-4.6" y="-1.8" width="6.4" height="6.4" fill="none" stroke="#1a1a1a" stroke-width="0.9"/></g>
<g transform="translate(438.4,53.0) scale(0.93)"><rect x="-1.6" y="-4.6" width="6.2" height="6.2" fill="#f4f4f4" stroke="#1a1a1a" stroke-width="0.9"/><rect x="-4.6" y="-1.8" width="6.4" height="6.4" fill="#f4f4f4" stroke="#1a1a1a" stroke-width="0.9"/><path d="M-4.6,-1.8 h-0 v6.4 h-0z" fill="#f2f01c"/><rect x="-4.6" y="-1.8" width="3" height="6.4" fill="#f2f01c" stroke="#1a1a1a" stroke-width="0.9"/></g>
<g transform="translate(452.3,53.0) scale(0.93)"><rect x="-4.6" y="-1.8" width="6.4" height="6.4" fill="#f4f4f4" stroke="#1a1a1a" stroke-width="0.9"/><rect x="-1.6" y="-4.6" width="6.2" height="6.2" fill="none" stroke="#1a1a1a" stroke-width="0.9"/><path d="M1.8,-1.8 L4.6,-4.6 L4.6,1.6 L1.8,4.6Z" fill="#f2f01c" stroke="#1a1a1a" stroke-width="0.9"/></g>
<g transform="translate(465.4,53.0) scale(0.93)"><rect x="-4.6" y="-1.8" width="6.4" height="6.4" fill="#f4f4f4" stroke="#1a1a1a" stroke-width="0.9"/><path d="M-4.6,-1.8 L-1.6,-4.6 L4.6,-4.6 L1.8,-1.8Z" fill="#f2f01c" stroke="#1a1a1a" stroke-width="0.9"/><path d="M1.8,-1.8 L4.6,-4.6 L4.6,1.6 L1.8,4.6Z" fill="none" stroke="#1a1a1a" stroke-width="0.9"/></g>
<g transform="translate(478.7,53.0) scale(0.93)"><rect x="-1.6" y="-4.6" width="6.2" height="6.2" fill="#f4f4f4" stroke="#1a1a1a" stroke-width="0.9"/><rect x="-4.6" y="-1.8" width="6.4" height="6.4" fill="#f4f4f4" stroke="#1a1a1a" stroke-width="0.9"/><rect x="-4.6" y="1.6" width="6.4" height="3" fill="#f2f01c" stroke="#1a1a1a" stroke-width="0.9"/></g>
<g transform="translate(491.8,53.0) scale(0.93)"><path d="M-4.6,-1.8 L-1.6,-4.6 L4.6,-4.6 L4.6,1.6 L1.8,4.6 L-4.6,4.6Z" fill="#f2f01c" stroke="#1a1a1a" stroke-width="0.9"/><path d="M-4.6,-1.8 H1.8 V4.6 M1.8,-1.8 L4.6,-4.6" fill="none" stroke="#8a8810" stroke-width="0.7"/></g>
<rect x="500.8" y="46.3" width="0.8" height="12.5" fill="#c9c7d2"/><rect x="501.6" y="46.3" width="0.7" height="12.5" fill="#fbfbfd"/>
<g transform="translate(509.5,52.5)"><path d="M-3.6,-3.6 v7.2 M-1.2,-3.6 v7.2 M1.2,-3.6 v7.2 M3.6,-3.6 v7.2 M-4.4,1 h8.8" stroke="#b2b0bc" stroke-width="0.8"/></g>
<g transform="translate(521.5,52.5)"><path d="M-4,2.6 q4,-1 7.6,-5 M-2,-2.6 l5,4" stroke="#b2b0bc" stroke-width="1.1" fill="none"/></g>
<g transform="translate(535.5,52.5)"><path d="M-5,-0.6 L0.4,-4.8 L5,0 L-0.6,4.4Z" fill="#f0f2ff" stroke="#2a3ac8" stroke-width="0.9"/><path d="M-3.4,-0.4 L0.2,-3.2 L2,-1.2 L-1.6,1.6Z" fill="#3a50e0"/><path d="M1.6,1 L4.6,4.4" stroke="#3a2a1a" stroke-width="1.5"/></g>
<rect x="544.0" y="46.3" width="0.8" height="12.5" fill="#c9c7d2"/><rect x="544.8" y="46.3" width="0.7" height="12.5" fill="#fbfbfd"/>
<g transform="translate(551.5,52.5)"><path d="M-4.6,3.4 L3.4,-4" stroke="#3a2a18" stroke-width="3"/><path d="M-3.4,2.4 L2.4,-3" stroke="#c89030" stroke-width="1.1"/><circle cx="4" cy="2.6" r="1.1" fill="#3a3a4a"/></g>
<g transform="translate(566.0,52.5)"><path d="M0,-4.4 L-4.4,3.6 M0,-4.4 L4.4,3.6" stroke="#e03020" stroke-width="1.3"/><circle cx="0" cy="0.6" r="2.2" fill="#e0c030" stroke="#7a2a10" stroke-width="0.8"/><circle cx="0" cy="-4" r="1" fill="#3a3a4a"/><circle cx="-4.2" cy="3.8" r="0.9" fill="#3a3a4a"/><circle cx="4.2" cy="3.8" r="0.9" fill="#3a3a4a"/></g>
</g>
<g filter="url(#bl2)">
<text x="3.6" y="70.6" font-size="7.60" fill="#b9b7c2" textLength="52.0" lengthAdjust="spacingAndGlyphs" font-weight="bold" >Design Explorer</text>
<rect x="50.4" y="154.9" width="29.2" height="8.6" fill="#bcbcd0"/>
<rect x="49.6" y="125.8" width="21" height="8.8" fill="none" stroke="#50505a" stroke-width="0.6" stroke-dasharray="0.8,0.8"/>
<clipPath id="tc"><rect x="3" y="75" width="91.5" height="366"/></clipPath><g clip-path="url(#tc)">
<rect x="8.3" y="79.4" width="5" height="5" fill="#fff" stroke="#9c9caa" stroke-width="0.7"/>
<rect x="9.3" y="81.5" width="3" height="0.8" fill="#20202a"/>
<g transform="translate(22.7,81.9)"><path d="M-2.6,-2.4 L1.6,-4.6 L3.2,-3.4 L3.2,3 L-0.6,4.6 L-2.6,2.4 L-4.6,0.6 Z" fill="#1428d8"/><path d="M0,-1.4 L3.2,-2.6 L3.2,1 L0.4,2.2Z" fill="#b8c8fa"/></g>
<text x="28.9" y="84.6" font-size="7.90" fill="#08080e" textLength="12.0" lengthAdjust="spacingAndGlyphs" >Rail</text>
<rect x="20.2" y="89.1" width="5" height="5" fill="#fff" stroke="#9c9caa" stroke-width="0.7"/>
<rect x="21.2" y="91.2" width="3" height="0.8" fill="#20202a"/>
<g transform="translate(34.3,91.6)"><rect x="-4.2" y="-4.2" width="8.4" height="8.4" fill="#e4dc20"/><rect x="-1.6" y="-2.2" width="5.8" height="6.4" fill="#1a2aa0"/><rect x="-0.6" y="1.2" width="3.8" height="2" fill="#6a88f0"/><rect x="-4.2" y="-4.2" width="8.4" height="8.4" fill="none" stroke="#3a3a18" stroke-width="0.5"/></g>
<text x="40.0" y="94.3" font-size="7.90" fill="#08080e" textLength="40.3" lengthAdjust="spacingAndGlyphs" >Configurations</text>
<g transform="translate(46.4,101.2)"><rect x="-4.2" y="-4.2" width="8.4" height="8.4" fill="#e4dc20"/><rect x="-1.6" y="-2.2" width="5.8" height="6.4" fill="#1a2aa0"/><rect x="-0.6" y="1.2" width="3.8" height="2" fill="#6a88f0"/><rect x="-4.2" y="-4.2" width="8.4" height="8.4" fill="none" stroke="#3a3a18" stroke-width="0.5"/></g>
<text x="52.1" y="103.9" font-size="7.90" fill="#08080e" textLength="28.0" lengthAdjust="spacingAndGlyphs" >Config&lt;1&gt;</text>
<rect x="20.2" y="108.4" width="5" height="5" fill="#fff" stroke="#9c9caa" stroke-width="0.7"/>
<rect x="21.2" y="110.5" width="3" height="0.8" fill="#20202a"/>
<g transform="translate(34.0,110.9)"><path d="M-4.4,3.4 L4,-3.6" stroke="#7a7a86" stroke-width="0.8"/></g>
<text x="40.0" y="113.6" font-size="7.90" fill="#08080e" textLength="13.7" lengthAdjust="spacingAndGlyphs" >Axes</text>
<g transform="translate(45.2,120.5)"><path d="M-4.4,3.4 L4,-3.6" stroke="#7a7a86" stroke-width="0.8"/></g>
<text x="51.0" y="123.2" font-size="7.90" fill="#08080e" textLength="18.6" lengthAdjust="spacingAndGlyphs" >X-Axis</text>
<g transform="translate(45.2,130.2)"><path d="M-4.4,3.4 L4,-3.6" stroke="#7a7a86" stroke-width="0.8"/></g>
<text x="51.0" y="132.9" font-size="7.90" fill="#08080e" textLength="18.6" lengthAdjust="spacingAndGlyphs" >Y-Axis</text>
<g transform="translate(45.2,139.9)"><path d="M-4.4,3.4 L4,-3.6" stroke="#7a7a86" stroke-width="0.8"/></g>
<text x="51.0" y="142.6" font-size="7.90" fill="#08080e" textLength="18.6" lengthAdjust="spacingAndGlyphs" >Z-Axis</text>
<rect x="20.2" y="147.0" width="5" height="5" fill="#fff" stroke="#9c9caa" stroke-width="0.7"/>
<rect x="21.2" y="149.1" width="3" height="0.8" fill="#20202a"/>
<g transform="translate(33.6,149.5)"><path d="M-3.6,-2.4 L1,-4.6 L4.6,-1 L-0.2,3.4Z" fill="#aebcf8" stroke="#2838d8" stroke-width="1.1"/><path d="M-0.2,3.4 L1.6,4.8" stroke="#2838d8" stroke-width="0.9"/><path d="M-4.8,4.6 L-2,0.6" stroke="#e05060" stroke-width="0.8"/><path d="M2.8,-4.8 l1.6,1.6" stroke="#e08840" stroke-width="0.8"/></g>
<text x="40.0" y="152.2" font-size="7.90" fill="#08080e" textLength="19.6" lengthAdjust="spacingAndGlyphs" >Planes</text>
<g transform="translate(44.6,159.2)"><path d="M-3.6,-2.4 L1,-4.6 L4.6,-1 L-0.2,3.4Z" fill="#aebcf8" stroke="#2838d8" stroke-width="1.1"/><path d="M-0.2,3.4 L1.6,4.8" stroke="#2838d8" stroke-width="0.9"/><path d="M-4.8,4.6 L-2,0.6" stroke="#e05060" stroke-width="0.8"/><path d="M2.8,-4.8 l1.6,1.6" stroke="#e08840" stroke-width="0.8"/></g>
<text x="51.0" y="161.9" font-size="7.90" fill="#08080e" textLength="27.2" lengthAdjust="spacingAndGlyphs" >XY-Plane</text>
<g transform="translate(44.6,168.8)"><path d="M-3.6,-2.4 L1,-4.6 L4.6,-1 L-0.2,3.4Z" fill="#aebcf8" stroke="#2838d8" stroke-width="1.1"/><path d="M-0.2,3.4 L1.6,4.8" stroke="#2838d8" stroke-width="0.9"/><path d="M-4.8,4.6 L-2,0.6" stroke="#e05060" stroke-width="0.8"/><path d="M2.8,-4.8 l1.6,1.6" stroke="#e08840" stroke-width="0.8"/></g>
<text x="51.0" y="171.5" font-size="7.90" fill="#08080e" textLength="27.2" lengthAdjust="spacingAndGlyphs" >YZ-Plane</text>
<g transform="translate(44.6,178.5)"><path d="M-3.6,-2.4 L1,-4.6 L4.6,-1 L-0.2,3.4Z" fill="#aebcf8" stroke="#2838d8" stroke-width="1.1"/><path d="M-0.2,3.4 L1.6,4.8" stroke="#2838d8" stroke-width="0.9"/><path d="M-4.8,4.6 L-2,0.6" stroke="#e05060" stroke-width="0.8"/><path d="M2.8,-4.8 l1.6,1.6" stroke="#e08840" stroke-width="0.8"/></g>
<text x="51.0" y="181.2" font-size="7.90" fill="#08080e" textLength="27.2" lengthAdjust="spacingAndGlyphs" >ZX-Plane</text>
<rect x="20.2" y="185.7" width="5" height="5" fill="#fff" stroke="#9c9caa" stroke-width="0.7"/>
<rect x="21.2" y="187.8" width="3" height="0.8" fill="#20202a"/>
<g transform="translate(33.8,188.2)"><path d="M-3.6,-3.6 L3.6,3.6 M3.6,-3.6 L-3.6,3.6" stroke="#e04050" stroke-width="0.8"/><path d="M-3.4,0 h6.8 M0,-3.4 v6.8" stroke="#2a30c0" stroke-width="1.2"/><circle cx="0" cy="0" r="1.7" fill="#2a30c0"/></g>
<text x="40.0" y="190.9" font-size="7.90" fill="#08080e" textLength="18.3" lengthAdjust="spacingAndGlyphs" >Points</text>
<g transform="translate(45.8,197.8)"><path d="M-3.6,-3.6 L3.6,3.6 M3.6,-3.6 L-3.6,3.6" stroke="#e04050" stroke-width="0.8"/><path d="M-3.4,0 h6.8 M0,-3.4 v6.8" stroke="#2a30c0" stroke-width="1.2"/><circle cx="0" cy="0" r="1.7" fill="#2a30c0"/></g>
<text x="51.8" y="200.5" font-size="7.90" fill="#08080e" textLength="16.8" lengthAdjust="spacingAndGlyphs" >Origin</text>
<g transform="translate(33.4,207.5)"><path d="M-4.4,0.8 q1,-4 3.2,-2.4 q1.6,-3 3.8,-1.4 q2.4,2.2 0.6,4.8 q-2.2,2.6 -5,1.4 q-2.6,-0.4 -2.6,-2.4z" fill="#8838d0"/><path d="M-3.2,-0.2 q1.2,-1.8 2.4,-0.6" stroke="#e0b8f8" stroke-width="0.9" fill="none"/></g>
<text x="40.0" y="210.2" font-size="7.90" fill="#08080e" textLength="25.6" lengthAdjust="spacingAndGlyphs" >Surfaces</text>
<g transform="translate(33.4,217.1)"><rect x="-4.2" y="-0.6" width="6.8" height="4.6" fill="#fff" stroke="#e01828" stroke-width="1.1"/><path d="M-3.4,-3.4 q2,-1.6 3.4,0.6" stroke="#e01828" stroke-width="1" fill="none"/><path d="M2.6,0.6 l2,-1 v4 l-2,-1z" fill="#e01828"/></g>
<text x="40.0" y="219.8" font-size="7.90" fill="#08080e" textLength="40.6" lengthAdjust="spacingAndGlyphs" >Redline Views</text>
<g transform="translate(34.0,226.8)"><path d="M-3.6,-4.4 v5 h3" stroke="#2a3ac8" stroke-width="1.3" fill="none"/><path d="M-1.4,0.6 L2,-1.4 L4.4,0.6 L4.4,3 L1,4.6 L-1.4,3Z" fill="#2a40d0"/><path d="M-1.4,0.6 L2,-1.4 L4.4,0.6 L1,2.2Z" fill="#8aa0f4"/></g>
<text x="40.0" y="229.5" font-size="7.90" fill="#08080e" textLength="40.6" lengthAdjust="spacingAndGlyphs" >Section Views</text>
<rect x="20.2" y="234.0" width="5" height="5" fill="#fff" stroke="#9c9caa" stroke-width="0.7"/>
<rect x="21.2" y="236.1" width="3" height="0.8" fill="#20202a"/>
<g transform="translate(33.6,236.5)"><path d="M-4.4,-2.4 L-1,-4.4 L4.4,-2.4 L4.4,2.6 L0,4.6 L-4.4,2.6Z" fill="#2038d0"/><path d="M-4.4,-2.4 L-1,-4.4 L4.4,-2.4 L0,-0.4Z" fill="#8aa0f4"/><path d="M-2.6,0.6 l2,1 v2" stroke="#c0ccff" stroke-width="0.8" fill="none"/><path d="M1.4,1 l2.4,2.6" stroke="#101a60" stroke-width="1.1"/></g>
<text x="40.0" y="239.2" font-size="7.90" fill="#08080e" textLength="25.0" lengthAdjust="spacingAndGlyphs" >Features</text>
<rect x="31.4" y="243.6" width="5" height="5" fill="#fff" stroke="#9c9caa" stroke-width="0.7"/>
<rect x="32.4" y="245.7" width="3" height="0.8" fill="#20202a"/>
<g transform="translate(45.2,246.1)"><path d="M-4.4,-2.4 L-1,-4.4 L4.4,-2.4 L4.4,2.6 L0,4.6 L-4.4,2.6Z" fill="#2038d0"/><path d="M-4.4,-2.4 L-1,-4.4 L4.4,-2.4 L0,-0.4Z" fill="#8aa0f4"/><path d="M-2.6,0.6 l2,1 v2" stroke="#c0ccff" stroke-width="0.8" fill="none"/><path d="M1.4,1 l2.4,2.6" stroke="#101a60" stroke-width="1.1"/></g>
<text x="51.8" y="248.8" font-size="7.90" fill="#08080e" textLength="17.4" lengthAdjust="spacingAndGlyphs" >Board</text>
<g transform="translate(57.2,255.8)"><path d="M-3.4,3.4 v-4.6 q0.4,-2.4 3,-2.4 q2.8,0 3,2.6 v1.6 h-3" stroke="#3a50d0" stroke-width="1" fill="#e4e8ff"/><path d="M1.6,-0.6 l2.6,3.6" stroke="#2a2a6a" stroke-width="0.9"/></g>
<text x="62.8" y="258.5" font-size="7.90" fill="#08080e" textLength="30.6" lengthAdjust="spacingAndGlyphs" >Sketch&lt;1&gt;</text>
<rect x="20.2" y="272.6" width="5" height="5" fill="#fff" stroke="#9c9caa" stroke-width="0.7"/>
<rect x="21.2" y="274.7" width="3" height="0.8" fill="#20202a"/>
<rect x="22.3" y="273.6" width="0.8" height="3" fill="#20202a"/>
<g transform="translate(33.8,275.1)"><path d="M-4.4,-2.4 L-1,-4.4 L4.4,-2.4 L4.4,2.6 L0,4.6 L-4.4,2.6Z" fill="#c8d4fa" stroke="#2038d0" stroke-width="1"/><path d="M-4.4,-2.4 L0,-0.4 L4.4,-2.4 M0,-0.4 V4.6" stroke="#2038d0" stroke-width="1" fill="none"/><rect x="-3" y="0.8" width="2.4" height="2.4" fill="#2038d0"/></g>
<text x="40.0" y="277.8" font-size="7.90" fill="#08080e" textLength="18.6" lengthAdjust="spacingAndGlyphs" >Edges</text>
<rect x="20.2" y="282.3" width="5" height="5" fill="#fff" stroke="#9c9caa" stroke-width="0.7"/>
<rect x="21.2" y="284.4" width="3" height="0.8" fill="#20202a"/>
<rect x="22.3" y="283.3" width="0.8" height="3" fill="#20202a"/>
<g transform="translate(33.8,284.8)"><path d="M-4.4,-2.4 L-1,-4.4 L4.4,-2.4 L4.4,2.6 L0,4.6 L-4.4,2.6Z" fill="#2038d0"/><path d="M-4.4,-2.4 L-1,-4.4 L4.4,-2.4 L0,-0.4Z" fill="#8aa0f4"/><path d="M0,-0.4 L4.4,-2.4 L4.4,2.6 L0,4.6Z" fill="#e02030"/></g>
<text x="40.0" y="287.5" font-size="7.90" fill="#08080e" textLength="18.0" lengthAdjust="spacingAndGlyphs" >Faces</text>
<rect x="20.2" y="291.9" width="5" height="5" fill="#fff" stroke="#9c9caa" stroke-width="0.7"/>
<rect x="21.2" y="294.0" width="3" height="0.8" fill="#20202a"/>
<rect x="22.3" y="292.9" width="0.8" height="3" fill="#20202a"/>
<g transform="translate(33.8,294.4)"><path d="M-4.4,-2.4 L-1,-4.4 L4.4,-2.4 L4.4,2.6 L0,4.6 L-4.4,2.6Z" fill="#2a40d0"/><path d="M-4.4,-2.4 L-1,-4.4 L4.4,-2.4 L0,-0.4Z" fill="#8aa0f4"/><circle cx="0" cy="-0.4" r="1.3" fill="#e02030"/><circle cx="-4" cy="2.4" r="1.1" fill="#e02030"/><circle cx="4" cy="2.4" r="1.1" fill="#e02030"/></g>
<text x="40.0" y="297.1" font-size="7.90" fill="#08080e" textLength="23.4" lengthAdjust="spacingAndGlyphs" >Vertices</text>
<path d="M36.6,262.4 l3.4,3.6 h28.6 l3.4,-3.6 M40,266.0 l-3.4,3.4 M68.6,266.0 l3.4,3.4" stroke="#1818e8" stroke-width="1.4" fill="none"/>
</g>
<rect x="3" y="442" width="91.5" height="10.6" fill="#f3f3f8"/>
<rect x="3.4" y="442.4" width="9" height="9.8" rx="1" fill="url(#sb)" stroke="#b4b4c8" stroke-width="0.5"/>
<rect x="85" y="442.4" width="9" height="9.8" rx="1" fill="url(#sb)" stroke="#b4b4c8" stroke-width="0.5"/>
<rect x="13.4" y="442.6" width="67.4" height="9.4" rx="1.2" fill="url(#sb)" stroke="#b0b0c6" stroke-width="0.6"/>
<path d="M8.6,445 l-2.4,2.3 l2.4,2.3" stroke="#20202a" stroke-width="1.3" fill="none"/>
<path d="M88.2,445 l2.4,2.3 l-2.4,2.3" stroke="#20202a" stroke-width="1.3" fill="none"/>
<path d="M45.5,446 v2.8 M47,446 v2.8 M48.5,446 v2.8" stroke="#c8c8da" stroke-width="0.6"/>
</g>
<g filter="url(#bl2)">
<rect x="586" y="64.6" width="13" height="1.2" fill="#c4c2ce"/><rect x="586" y="65.8" width="13" height="0.7" fill="#fafafc"/>
<rect x="602.6" y="64.6" width="13" height="1.2" fill="#c4c2ce"/><rect x="602.6" y="65.8" width="13" height="0.7" fill="#fafafc"/>
<g transform="translate(591.8,75.5)"><path d="M-4.4,-4.4 V4.4 H4.4" stroke="#2a3ac0" stroke-width="1.1" fill="none"/><path d="M-3,3 q2,-1 3,-3 q1,2 3,1.6" stroke="#2a3ac0" stroke-width="0.8" fill="none"/><path d="M0,1 L4.4,-4.6" stroke="#e0a020" stroke-width="1.8"/></g>
<rect x="591.1" y="85.1" width="1.5" height="1.5" fill="#14141c"/>
<g transform="translate(591.8,96.6)"><path d="M-4.4,0 h8.8 M0,-4.4 v8.8" stroke="#16161e" stroke-width="1.1"/></g>
<rect x="585.6" y="105.6" width="12.5" height="0.8" fill="#c9c7d2"/><rect x="585.6" y="106.4" width="12.5" height="0.7" fill="#fbfbfd"/>
<g transform="translate(591.8,113.5)"><path d="M-1,-3 l2,2 l-2,2" stroke="#d2d0da" stroke-width="1" fill="none"/></g>
<g transform="translate(591.8,123.5)"><path d="M1,-3 l-2,2 l2,2" stroke="#d2d0da" stroke-width="1" fill="none"/></g>
<g transform="translate(591.8,133.5)"><path d="M-3.6,3 h3 M0.6,1 l3,-3.6" stroke="#d2d0da" stroke-width="1.1" fill="none"/></g>
<rect x="585.6" y="142.3" width="12.5" height="0.8" fill="#c9c7d2"/><rect x="585.6" y="143.1" width="12.5" height="0.7" fill="#fbfbfd"/>
<g transform="translate(591.8,150.8)"><path d="M-4.2,4 L4.2,-4" stroke="#30303c" stroke-width="1.1"/></g>
<rect x="591.1" y="161.3" width="1.5" height="1.5" fill="#14141c"/>
<g transform="translate(591.8,171.4)"><circle cx="0" cy="0" r="3.9" fill="none" stroke="#2a2a4a" stroke-width="1"/><circle cx="0" cy="0" r="0.9" fill="#2a2a4a"/></g>
<g transform="translate(591.8,185.5)"><path d="M-2.6,-2.6 q3.4,-2.6 5,0.6 q0.8,3.4 -2.6,4.6" stroke="#4a4a7a" stroke-width="1" fill="none"/><circle cx="-0.4" cy="1.2" r="0.6" fill="#4a4a7a"/></g>
<rect x="591.1" y="195.1" width="1.5" height="1.5" fill="#14141c"/>
<g transform="translate(591.8,204.8)"><rect x="-4.2" y="-2.8" width="8.4" height="5.8" fill="#fafaff" stroke="#3a3a8a" stroke-width="1"/></g>
<rect x="591.1" y="215.8" width="1.5" height="1.5" fill="#14141c"/>
<g transform="translate(591.8,227.3)"><path d="M-4.2,3.2 q2,-4 4.2,-3.4 q2.2,-0.4 4.2,3.4 M-2.6,-3.4 l2,2 M2.6,-3.4 l-2,2" stroke="#3a3a5a" stroke-width="0.9" fill="none"/></g>
<rect x="591.1" y="235.9" width="1.5" height="1.5" fill="#14141c"/>
<g transform="translate(591.8,246.0)"><circle cx="0" cy="0" r="2.3" fill="#f0e838"/><circle cx="0" cy="0" r="0.7" fill="#30303a"/></g>
<rect x="585.6" y="253.8" width="12.5" height="0.8" fill="#c9c7d2"/><rect x="585.6" y="254.6" width="12.5" height="0.7" fill="#fbfbfd"/>
<g transform="translate(591.8,264.5)"><rect x="-4.4" y="-2.4" width="8.8" height="6" fill="none" stroke="#bcbac6" stroke-width="0.9"/><path d="M-4.4,0 h8.8 M-1.6,-2.4 v6 M1.6,-2.4 v6 M-4.4,-4.6 h6" stroke="#c4c2cc" stroke-width="0.8"/></g>
<g transform="translate(591.8,280.5)"><rect x="-4.4" y="-4" width="8.8" height="8" fill="#e0dee6" stroke="#cac8d2" stroke-width="0.9"/></g>
<g transform="translate(591.8,292.0)"><path d="M-3.8,-3.8 L3.8,3.8 M3.8,-3.8 L-3.8,3.8" stroke="#cac8d2" stroke-width="1"/></g>
<g transform="translate(591.8,314.0)"><path d="M-3.8,9 V-5 q0,-3 3,-3 H4 M-1,9 V-3 q0,-2 2,-2 H4" stroke="#cac8d2" stroke-width="1" fill="none"/></g>
<rect x="585.6" y="332.6" width="12.5" height="0.8" fill="#c9c7d2"/><rect x="585.6" y="333.4" width="12.5" height="0.7" fill="#fbfbfd"/>
<g transform="translate(591.8,342.0)"><circle cx="0" cy="0" r="3.8" fill="none" stroke="#3a4ac8" stroke-width="1.8" stroke-dasharray="1.6,1"/><circle cx="0" cy="0" r="2.4" fill="#e8ecff" stroke="#2a3ab0" stroke-width="0.9"/><circle cx="0" cy="0" r="0.9" fill="#1a1a5a"/></g>
<rect x="591.1" y="351.3" width="1.5" height="1.5" fill="#14141c"/>
<g transform="translate(591.8,364.0)"><path d="M0,-3.4 L3.4,2.6 H-3.4Z" fill="none" stroke="#d4d2dc" stroke-width="1"/></g>
<g transform="translate(591.8,379.6)"><path d="M-3.6,-3.4 q1.8,-1 3,0 v7.4 q-1.2,-1 -3,0z M3.6,-3.4 q-1.8,-1 -3,0 v7.4 q1.2,-1 3,0z" fill="#b8b6c2"/></g>
<g transform="translate(591.8,392.3)"><circle cx="0" cy="0" r="4.4" fill="#3a5ad8"/><circle cx="-1" cy="-1.4" r="2" fill="#9ab4f8"/><circle cx="1.4" cy="0.8" r="2" fill="#f0e030"/><path d="M-4.2,1.8 A4.4,4.4 0 0 0 4.2,1.8 q-4,2.4 -8.4,0z" fill="#1a2a80"/></g>
<g transform="translate(609.2,76.0)"><rect x="-5.6" y="-4" width="11.2" height="8" rx="2.2" fill="#2030d0"/><path d="M-4.4,-2.6 h7 l1.6,1.6 h-7z" fill="#90a4f8"/><path d="M-2.4,0.2 h3.4 v2.2" stroke="#e0e6ff" stroke-width="0.9" fill="none"/><path d="M2,0.6 l2.6,2.8" stroke="#0a1460" stroke-width="1.1"/></g>
<g transform="translate(609.2,89.4)"><rect x="-5.4" y="-4.2" width="10.8" height="8.4" rx="2.2" fill="#2030d0"/><path d="M-4.2,-3 h8.4 l-1.2,1.6 h-6z" fill="#90a4f8"/><rect x="-2" y="-0.4" width="3.6" height="3" fill="#c8d2fc"/></g>
<rect x="603.0" y="97.0" width="12.5" height="0.8" fill="#c9c7d2"/><rect x="603.0" y="97.8" width="12.5" height="0.7" fill="#fbfbfd"/>
<g transform="translate(609.2,106.5)"><rect x="-5.5" y="-5.5" width="11.0" height="11.0" fill="#f8f8fb"/><path d="M0,-5 V4.6" stroke="#2030d0" stroke-width="1.2"/><path d="M-4.6,3.8 q0,-6 4.6,-6 q4.6,0 4.6,6 M-2.4,4 q0,-3.4 2.4,-3.4 q2.4,0 2.4,3.4" stroke="#2030d0" stroke-width="1.2" fill="none"/><path d="M-4.8,1.4 h9.6" stroke="#2030d0" stroke-width="1"/></g>
<g transform="translate(609.2,120.0)"><path d="M-4.4,-2.4 L-0.6,-4.4 L4.4,-2.6 L4.4,2.4 L0.4,4.6 L-4.4,2.6Z" fill="#2030d0"/><path d="M-4.4,-2.4 L-0.6,-4.4 L4.4,-2.6 L0.4,-0.6Z" fill="#90a4f8"/><path d="M-3,0.6 l2,1 M1.4,1.6 l2,-1" stroke="#d0d8ff" stroke-width="1"/><circle cx="-1.8" cy="2.6" r="0.8" fill="#d0d8ff"/></g>
<rect x="603.0" y="128.3" width="12.5" height="0.8" fill="#c9c7d2"/><rect x="603.0" y="129.1" width="12.5" height="0.7" fill="#fbfbfd"/>
<g transform="translate(609.2,136.3)"><rect x="-4.4" y="-4.4" width="8.8" height="8.8" fill="#2030d0"/><path d="M-4.4,-4.4 h4.6 l-4.6,4.6z" fill="#a8b8fa"/><rect x="0.6" y="0.6" width="2.8" height="2.8" fill="#d8e0ff"/></g>
<g transform="translate(609.2,149.8)"><rect x="-4.4" y="-4.4" width="8.8" height="8.8" fill="#2030d0"/><path d="M-4.4,4.4 v-8.8 h8.8z" fill="#a8b8fa"/><rect x="-0.4" y="-0.8" width="3" height="3" fill="#e8ecff"/></g>
<rect x="603.0" y="157.8" width="12.5" height="0.8" fill="#c9c7d2"/><rect x="603.0" y="158.6" width="12.5" height="0.7" fill="#fbfbfd"/>
<g transform="translate(609.2,165.8)"><rect x="-5.5" y="-5.5" width="11.0" height="11.0" fill="#f8f8fb"/><path d="M-4.2,0.6 L-1.4,3.8 L4.4,-3.8" stroke="#2030d0" stroke-width="2.6" fill="none"/><path d="M0.6,-3.8 q2,-1.6 3.6,0" stroke="#6a80f0" stroke-width="1.2" fill="none"/></g>
<g transform="translate(609.2,179.6)"><rect x="-4.4" y="-4.4" width="8.8" height="8.8" fill="#2030d0"/><path d="M-2.6,-2.6 h5.2 v5.2z" fill="#b0c0fa"/><path d="M-4.4,4.4 l3.4,-3.4" stroke="#e0e6ff" stroke-width="1"/></g>
<rect x="603.0" y="188.0" width="12.5" height="0.8" fill="#c9c7d2"/><rect x="603.0" y="188.8" width="12.5" height="0.7" fill="#fbfbfd"/>
<g transform="translate(609.2,197.0)"><rect x="-5.5" y="-5.5" width="11.0" height="11.0" fill="#f8f8fb"/><path d="M-4,-3.4 h3 v3.4 h-3z M1,-3.4 h3 v3.4 h-3z M-4,1.4 l1.4,2.4 l1.6,-2.4 M1,1.4 l1.4,2.4 l1.6,-2.4" fill="#2030d0" stroke="#2030d0" stroke-width="0.8"/></g>
<g transform="translate(609.2,210.4)"><rect x="-5.5" y="-5.5" width="11.0" height="11.0" fill="#f8f8fb"/><path d="M-4,-3.4 h3 v3.4 h-3z M1,-3.4 h3 v3.4 h-3z M-4,1.4 l1.4,2.4 l1.6,-2.4 M1,1.4 l1.4,2.4 l1.6,-2.4" fill="#2030d0" stroke="#2030d0" stroke-width="0.8"/><path d="M-4.6,4.4 h9.2" stroke="#2030d0" stroke-width="0.9"/></g>
<rect x="603.0" y="218.6" width="12.5" height="0.8" fill="#c9c7d2"/><rect x="603.0" y="219.4" width="12.5" height="0.7" fill="#fbfbfd"/>
<g transform="translate(609.2,227.3)"><rect x="-5.7" y="-5.7" width="11.4" height="11.4" fill="#f8f8fb"/><path d="M-4.6,-1.6 L-1,-3.6 L1,-2.4 L1,2.4 L-1.6,3.8 L-4.6,2.4Z" fill="#2030d0"/><path d="M-1,-4.6 L1.6,-5.6 L4.6,-4.2 L4.6,-0.4 L1.6,1 L-1,-0.4Z" fill="#2a9a3a"/><path d="M0.6,0.8 L3.2,-0.4 L4.8,0.6 L4.8,3.6 L2.4,4.8 L0.6,3.6Z" fill="#d83030"/><path d="M-1,-4.6 L1.6,-5.6 L4.6,-4.2 L1.8,-3Z" fill="#e0d030"/></g>
<rect x="608.5" y="236.9" width="1.5" height="1.5" fill="#14141c"/>
<rect x="603.0" y="242.0" width="12.5" height="0.8" fill="#c9c7d2"/><rect x="603.0" y="242.8" width="12.5" height="0.7" fill="#fbfbfd"/>
<g transform="translate(609.2,250.8)"><rect x="-5.5" y="-5.0" width="11.0" height="10.0" fill="#f8f8fb"/><ellipse cx="0" cy="0" rx="4.8" ry="3" transform="rotate(-35)" fill="#3a50e0"/><path d="M-3,1.6 q3,-1 5.6,-4" stroke="#c8d0ff" stroke-width="1.1" fill="none"/><path d="M-3.6,3.8 L3.6,-4" stroke="#e04060" stroke-width="0.8"/></g>
<rect x="603.0" y="258.6" width="12.5" height="0.8" fill="#c9c7d2"/><rect x="603.0" y="259.4" width="12.5" height="0.7" fill="#fbfbfd"/>
<g transform="translate(609.2,266.0)"><rect x="-5.5" y="-5.5" width="11.0" height="11.0" fill="#f8f8fb"/><path d="M-4.4,-2 q2,-3 4,-0.6 q2,-2.6 4.4,0 q-0.4,3 -4,3.4 q-3.6,0.4 -4.4,-2.8z" fill="#8a38d0"/><path d="M-3,3.6 q1.4,-2.4 2.6,0 q1,1.4 2.4,-1" stroke="#2a8a3a" stroke-width="1.1" fill="none"/><rect x="2" y="1.6" width="2.6" height="3" fill="#2a40c8"/></g>
<rect x="603.0" y="274.0" width="12.5" height="0.8" fill="#c9c7d2"/><rect x="603.0" y="274.8" width="12.5" height="0.7" fill="#fbfbfd"/>
<g transform="translate(609.2,282.4)"><path d="M-4.4,-1.4 q0,-3 3,-3 h3.6 q2.2,0 2.2,2.2 v4 q0,2.6 -2.6,2.6 h-3.6 q-2.6,0 -2.6,-2.6z" fill="#2030d0"/><path d="M-3.4,-1 q0,-2.4 2.4,-2.4 h2.6 q-3.4,0.8 -3.8,4.8z" fill="#90a4f8"/></g>
<g transform="translate(609.2,295.6)"><path d="M-4.4,-1.4 q0,-3 3,-3 h3.6 q2.2,0 2.2,2.2 v4 q0,2.6 -2.6,2.6 h-3.6 q-2.6,0 -2.6,-2.6z" fill="#2030d0"/><path d="M-3.4,-1 q0,-2.4 2.4,-2.4 h2.6 q-3.4,0.8 -3.8,4.8z" fill="#90a4f8"/><path d="M1,-4 l3,3" stroke="#c8d0ff" stroke-width="1"/></g>
<rect x="603.0" y="303.6" width="12.5" height="0.8" fill="#c9c7d2"/><rect x="603.0" y="304.4" width="12.5" height="0.7" fill="#fbfbfd"/>
<g transform="translate(609.2,313.0)"><rect x="-4.4" y="-4.4" width="8.8" height="8.8" fill="#2030d0"/><path d="M-4.4,-4.4 h8.8 l-1.6,1.8 h-5.6z" fill="#98acf8"/><rect x="-2.6" y="-1.4" width="5.4" height="4.6" fill="#1420a0"/></g>
<g transform="translate(609.2,326.0)"><rect x="-4.4" y="-4.4" width="8.8" height="8.8" fill="#2030d0"/><path d="M-4.4,-4.4 h8.8 l-1.6,1.8 h-5.6z" fill="#98acf8"/><path d="M-1.4,0 h4.4 v3.4 h-4.4z" fill="#b8c6fa"/></g>
<g transform="translate(609.2,339.0)"><rect x="-4.4" y="-4.4" width="8.8" height="8.8" fill="#2030d0"/><rect x="-3.2" y="-3.2" width="6.4" height="6.4" fill="none" stroke="#98acf8" stroke-width="0.9"/><path d="M-1,-1.6 l3,1.8 l-3,1.8z" fill="#e8ecff"/></g>
<g transform="translate(609.2,352.8)"><rect x="-4.8" y="-4.8" width="4.6" height="5.4" fill="#f4f0c0" stroke="#8a8420" stroke-width="0.7"/><path d="M-1.4,0.6 L2,-3.4 L4.8,-1.4 L4.8,2.6 L1.4,4.8 L-1.4,3.4Z" fill="#2030d0"/><path d="M-0.4,0.6 l2.6,1.4" stroke="#c8d0ff" stroke-width="1"/></g>
<rect x="603.0" y="360.6" width="12.5" height="0.8" fill="#c9c7d2"/><rect x="603.0" y="361.4" width="12.5" height="0.7" fill="#fbfbfd"/>
<g transform="translate(609.2,369.0)"><path d="M-4.4,-1 L-1.4,-3.8 L-1.4,4.4 L-4.4,4.4Z" fill="#20203a"/><path d="M-3.2,0.6 h1 v2 h-1z" fill="#e8e8f0"/><path d="M0.6,-1.6 q1.4,1.8 0,3.6 M2.4,-2.6 q2,3 0,5.6" stroke="#5a5a8a" stroke-width="0.8" fill="none"/></g>
<rect x="603.0" y="377.0" width="12.5" height="0.8" fill="#c9c7d2"/><rect x="603.0" y="377.8" width="12.5" height="0.7" fill="#fbfbfd"/>
<g transform="translate(609.2,385.8)"><path d="M-4.4,-2.6 v6.4 M4.4,-2.6 v6.4" stroke="#20203a" stroke-width="1.1"/><path d="M-4,1 h8" stroke="#2030d0" stroke-width="1.8"/><path d="M-2,-4.6 l1.2,2.4 l1.2,-2.4z M1,-4.6 l1.2,2.4 l1.2,-2.4z" fill="#e02838"/></g>
<rect x="608.5" y="394.9" width="1.5" height="1.5" fill="#14141c"/>
<g transform="translate(612.0,459.0)"><circle cx="0" cy="0" r="4.6" fill="#3a3a50"/><path d="M0,0 L4.4,-1.4 A4.6,4.6 0 0 0 0.8,-4.5Z" fill="#e8c838"/><path d="M0,0 L-3.6,2.8 A4.6,4.6 0 0 0 2.4,3.9Z" fill="#b0a070"/><circle cx="-1.4" cy="-1.6" r="1.5" fill="#8a8ab0"/></g>
</g>
</svg></body></html>
